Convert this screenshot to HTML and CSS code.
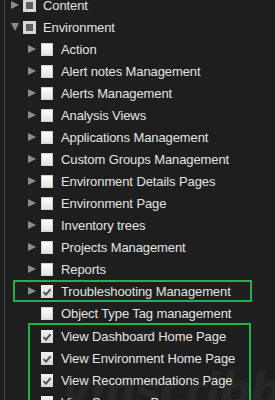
FILE: index.html
```html
<!DOCTYPE html>
<html lang="en">
<head>
    <meta charset="UTF-8">
    <meta name="viewport" content="width=device-width, initial-scale=1.0">
    <title>Permissions Tree</title>
    <link rel="stylesheet" href="styles.css">
</head>
<body>
    <div class="tree">
        <div class="row lvl0"><span class="tog closed"></span><span class="cb part"></span><span class="label">Content</span></div>
        <div class="row lvl0"><span class="tog open"></span><span class="cb part"></span><span class="label">Environment</span></div>
        <div class="row lvl1"><span class="tog closed"></span><span class="cb"></span><span class="label">Action</span></div>
        <div class="row lvl1"><span class="tog closed"></span><span class="cb"></span><span class="label">Alert notes Management</span></div>
        <div class="row lvl1"><span class="tog closed"></span><span class="cb"></span><span class="label">Alerts Management</span></div>
        <div class="row lvl1"><span class="tog closed"></span><span class="cb"></span><span class="label">Analysis Views</span></div>
        <div class="row lvl1"><span class="tog closed"></span><span class="cb"></span><span class="label">Applications Management</span></div>
        <div class="row lvl1"><span class="tog closed"></span><span class="cb"></span><span class="label">Custom Groups Management</span></div>
        <div class="row lvl1"><span class="tog closed"></span><span class="cb"></span><span class="label">Environment Details Pages</span></div>
        <div class="row lvl1"><span class="tog closed"></span><span class="cb"></span><span class="label">Environment Page</span></div>
        <div class="row lvl1"><span class="tog closed"></span><span class="cb"></span><span class="label">Inventory trees</span></div>
        <div class="row lvl1"><span class="tog closed"></span><span class="cb"></span><span class="label">Projects Management</span></div>
        <div class="row lvl1"><span class="tog closed"></span><span class="cb"></span><span class="label">Reports</span></div>
        <div class="row lvl1 marked"><span class="tog closed"></span><span class="cb checked"><svg viewBox="0 0 12 12" width="12" height="12"><path d="M2.5 6.2 L5 8.7 L9.6 3.2" fill="none" stroke="#4d4d4d" stroke-width="1.8"/></svg></span><span class="label">Troubleshooting Management</span></div>
        <div class="row leaf"><span class="cb"></span><span class="label">Object Type Tag management</span></div>
        <div class="group">
            <div class="row leaf"><span class="cb checked"><svg viewBox="0 0 12 12" width="12" height="12"><path d="M2.5 6.2 L5 8.7 L9.6 3.2" fill="none" stroke="#4d4d4d" stroke-width="1.8"/></svg></span><span class="label">View Dashboard Home Page</span></div>
            <div class="row leaf"><span class="cb checked"><svg viewBox="0 0 12 12" width="12" height="12"><path d="M2.5 6.2 L5 8.7 L9.6 3.2" fill="none" stroke="#4d4d4d" stroke-width="1.8"/></svg></span><span class="label">View Environment Home Page</span></div>
            <div class="row leaf"><span class="cb checked"><svg viewBox="0 0 12 12" width="12" height="12"><path d="M2.5 6.2 L5 8.7 L9.6 3.2" fill="none" stroke="#4d4d4d" stroke-width="1.8"/></svg></span><span class="label">View Recommendations Page</span></div>
            <div class="row leaf"><span class="cb checked"><svg viewBox="0 0 12 12" width="12" height="12"><path d="M2.5 6.2 L5 8.7 L9.6 3.2" fill="none" stroke="#4d4d4d" stroke-width="1.8"/></svg></span><span class="label">View Summary Page</span></div>
        </div>
    </div>
    <div class="watermark">vmscribble</div>
</body>
</html>
```

FILE: styles.css
```css
html, body {
    height: 400px;
    overflow: hidden;
}
body {
    margin: 0;
    background-color: #1e1e1e;
    font-family: "Liberation Sans", Arial, sans-serif;
    font-size: 13px;
    color: #e4e4e4;
    position: relative;
}
.tree {
    position: relative;
    z-index: 1;
    margin-left: 4px;
    margin-top: -6px;
    border-left: 1px solid #474747;
    min-height: 420px;
}
.row {
    display: flex;
    align-items: center;
    height: 22px;
    box-sizing: border-box;
    white-space: nowrap;
    letter-spacing: -0.1px;
}
.row.lvl0 {
    padding-left: 6px;
}
.row.lvl1 {
    padding-left: 23px;
}
.row.leaf {
    padding-left: 36px;
}
.row.marked {
    margin-left: 8px;
    width: 239px;
    padding-left: 13px;
    border: 2px solid #22b04b;
}
.group {
    margin-left: 23px;
    margin-top: -1px;
    width: 219px;
    border: 2px solid #22b04b;
    border-bottom: none;
}
.group .row.leaf {
    padding-left: 11px;
}
.tog {
    flex-shrink: 0;
    width: 0;
    height: 0;
    margin-right: 4px;
}
.row.lvl1 .tog {
    margin-right: 5px;
}
.tog.closed {
    border-left: 8px solid #829090;
    border-top: 4.5px solid transparent;
    border-bottom: 4.5px solid transparent;
}
.tog.open {
    border-top: 8px solid #829090;
    border-left: 4px solid transparent;
    border-right: 4px solid transparent;
}
.cb {
    width: 12px;
    height: 13px;
    box-sizing: border-box;
    flex-shrink: 0;
    margin-right: 8px;
    background: linear-gradient(#ffffff, #e2e2e2);
    border: 1px solid #cfcfcf;
}
.cb.part {
    width: 13px;
    background: #5e5e5e;
    border: 3px solid #d6d6d6;
    margin-right: 7px;
}
.cb.checked {
    background: linear-gradient(#f2f2f2, #d4d4d4);
    border: none;
}
.cb svg {
    display: block;
    margin-top: 1px;
}
.watermark {
    position: absolute;
    left: 62px;
    top: 364px;
    z-index: 0;
    white-space: nowrap;
    font-family: "DejaVu Sans", sans-serif;
    font-size: 44px;
    font-weight: bold;
    font-style: italic;
    color: #272727;
    letter-spacing: -1px;
}
```
